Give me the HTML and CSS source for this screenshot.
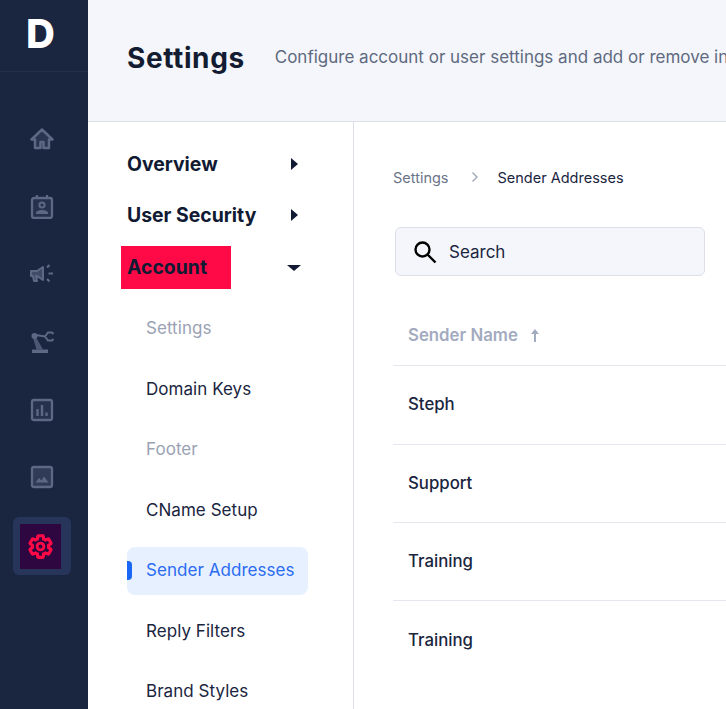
FILE: index.html
```html
<!DOCTYPE html>
<html lang="en">
<head>
<meta charset="utf-8">
<title>Settings</title>
<link rel="stylesheet" href="styles.css">
</head>
<body>
<div class="app">
  <aside class="rail">
    <div class="logo-row"><span class="logo">D</span></div>
    <nav class="rail-nav">
      <a class="rail-item"><svg viewBox="0 0 24 24" class="rail-icon"><path d="M12 2.500 1.500 12.500H5V21h5.500v-6h3v6H19v-8.500h3.500z" fill="currentColor" fill-opacity=".25" stroke="currentColor" stroke-width="2.500" stroke-linejoin="round"/></svg></a>
      <a class="rail-item"><svg viewBox="0 0 24 24" class="rail-icon"><rect x="2" y="3" width="20" height="20" rx="2" fill="currentColor" fill-opacity=".2" stroke="currentColor" stroke-width="2.300"/><path d="M7 0v4M17 0v4" stroke="currentColor" stroke-width="2.200"/><circle cx="12" cy="10" r="2.600" fill="none" stroke="currentColor" stroke-width="2"/><path d="M6 19v-1c0-2 3-3 6-3s6 1 6 3v1z" fill="currentColor"/></svg></a>
      <a class="rail-item"><svg viewBox="0 0 24 24" class="rail-icon"><path d="M1 9h6l6-4v13l-6-4H6l1 5H4l-1-5H1z" fill="currentColor" fill-opacity=".6" stroke="currentColor" stroke-width="2" stroke-linejoin="round"/><path d="M17 5.500 19.500 3M18.500 11.500H23M17 17l2.500 2.500" stroke="currentColor" stroke-width="2.200"/></svg></a>
      <a class="rail-item"><svg viewBox="0 0 24 24" class="rail-icon"><path d="M2 23h16v-3.500H2z" fill="currentColor"/><path d="M3 8h3.500L13 19.500H6.500z" fill="currentColor" fill-opacity=".75"/><circle cx="4.500" cy="6" r="3" fill="currentColor"/><path d="m6 5 9 1.500M15 6.500l3-4h4l1.500 1.500M15 6.500l3 4h4l1.500-1.500" fill="none" stroke="currentColor" stroke-width="2"/></svg></a>
      <a class="rail-item"><svg viewBox="0 0 24 24" class="rail-icon"><rect x="2" y="2" width="20" height="20" rx="2" fill="currentColor" fill-opacity=".2" stroke="currentColor" stroke-width="2.300"/><path d="M7.500 18v-7M12 18V7M16.500 18v-3.500" stroke="currentColor" stroke-width="2.400"/></svg></a>
      <a class="rail-item"><svg viewBox="0 0 24 24" class="rail-icon"><rect x="2" y="2" width="20" height="20" rx="2" fill="currentColor" fill-opacity=".35" stroke="currentColor" stroke-width="2.300"/><path d="m5.500 17.500 3.500-4.500 2.500 2.500 2.500-4 4.500 6z" fill="currentColor"/></svg></a>
      <a class="rail-item rail-item-active"><span class="gear-box"><svg viewBox="0 0 24 24" class="gear"><path d="M19.140 12.940c.04-.3.060-.61.060-.94 0-.32-.02-.64-.07-.94l2.030-1.580a.49.490 0 0 0 .12-.61l-1.920-3.320a.49.490 0 0 0-.59-.22l-2.390.96c-.5-.38-1.030-.7-1.620-.94l-.36-2.540a.48.480 0 0 0-.48-.41h-3.840a.48.480 0 0 0-.47.41l-.36 2.540c-.59.240-1.130.57-1.620.94l-2.390-.96a.48.480 0 0 0-.59.220L2.740 8.870a.48.480 0 0 0 .12.61l2.030 1.580c-.05.3-.09.63-.09.94s.02.640.07.94l-2.030 1.580a.49.490 0 0 0-.12.61l1.920 3.320c.12.220.37.290.59.220l2.390-.96c.5.380 1.030.7 1.620.94l.36 2.540c.05.240.24.410.48.410h3.840c.24 0 .44-.17.47-.41l.36-2.540c.59-.24 1.130-.56 1.620-.94l2.390.96c.22.080.47 0 .59-.22l1.920-3.320a.48.480 0 0 0-.12-.61z" fill="none" stroke="currentColor" stroke-width="2.800"/><circle cx="12" cy="12" r="3" fill="none" stroke="currentColor" stroke-width="2.600"/></svg></span></a>
    </nav>
  </aside>
  <div class="main">
    <header class="topbar">
      <h1 class="title">Settings</h1>
      <p class="subtitle">Configure account or user settings and add or remove integrations</p>
    </header>
    <div class="body">
      <nav class="side">
        <div class="group"><span>Overview</span><i class="caret-right"></i></div>
        <div class="group"><span>User Security</span><i class="caret-right"></i></div>
        <div class="group group-open"><span class="flagged">Account</span><i class="caret-down"></i></div>
        <a class="sub sub-muted">Settings</a>
        <a class="sub">Domain Keys</a>
        <a class="sub sub-muted">Footer</a>
        <a class="sub">CName Setup</a>
        <a class="sub sub-active">Sender Addresses</a>
        <a class="sub">Reply Filters</a>
        <a class="sub">Brand Styles</a>
      </nav>
      <section class="content">
        <div class="crumbs"><span class="crumb-link">Settings</span><svg viewBox="0 0 8 12" class="crumb-sep"><path d="m1.500 1.500 4.500 4.500-4.500 4.500" fill="none" stroke="currentColor" stroke-width="1.300"/></svg><span class="crumb-now">Sender Addresses</span></div>
        <div class="search"><svg viewBox="0 0 24 24" class="search-icon"><circle cx="9.500" cy="9.500" r="7" fill="none" stroke="currentColor" stroke-width="2.400"/><path d="m14.500 14.500 8 8" stroke="currentColor" stroke-width="2.400"/></svg><span>Search</span></div>
        <div class="thead"><span>Sender Name</span><svg viewBox="0 0 10 14" class="sort"><path d="M5 14V4" stroke="currentColor" stroke-width="2"/><path d="M1 6l4-5 4 5z" fill="currentColor"/></svg></div>
        <div class="row row-tall">Steph</div>
        <div class="row">Support</div>
        <div class="row">Training</div>
        <div class="row row-last">Training</div>
      </section>
    </div>
  </div>
</div>
</body>
</html>
```
FILE: styles.css
```css
html, body { margin: 0; padding: 0; height: 100%; overflow: hidden; background: #fff; }
body { font-family: Inter, "Liberation Sans", sans-serif; color: #1a2540; }
a { display: block; }
.app { display: flex; height: 709px; width: 726px; overflow: hidden; }
.rail { flex: 0 0 88px; background: #1a2540; display: flex; flex-direction: column; }
.logo-row { height: 71px; border-bottom: 1px solid #232f4d; display: flex; justify-content: center; }
.logo { font: 800 40px/67px Inter, sans-serif; color: #fff; margin-left: -7px; }
.rail-nav { display: flex; flex-direction: column; padding-top: 33px; align-items: center; }
.rail-item { width: 58px; height: 67.700px; display: flex; align-items: center; justify-content: center; color: #5c6884; margin-left: -5px; }
.rail-icon { width: 24px; height: 24px; }
.rail-item-active { height: 58px; margin-top: 6px; background: #27355a; border-radius: 6px; }
.gear-box { width: 41px; height: 45px; margin: 1px 3px 0 0; background: #2e0640; display: flex; align-items: center; justify-content: center; color: #ff0a47; }
.gear { width: 27px; height: 27px; }
.main { flex: 1; min-width: 0; display: flex; flex-direction: column; }
.topbar { height: 121px; flex: none; background: #f5f6fb; border-bottom: 1px solid #dcdfe8; display: flex; align-items: center; padding-left: 39px; white-space: nowrap; overflow: hidden; }
.title { margin: -6px 30px 0 0; font: 700 28px/1 Inter, sans-serif; letter-spacing: .6px; color: #131c30; }
.subtitle { margin: -8px 0 0; font-size: 17px; color: #5e6a80; }
.body { flex: 1; display: flex; min-height: 0; }
.side { width: 266px; flex: none; border-right: 1px solid #dcdfe8; box-sizing: border-box; padding: 16px 0 0 39px; }
.group { width: 181px; height: 51px; display: flex; align-items: center; justify-content: space-between; font-size: 19.400px; font-weight: 700; color: #111a33; padding-right: 5px; box-sizing: border-box; }
.flagged { background: #ff0a47; margin-left: -6px; padding-left: 6px; width: 104px; height: 43px; line-height: 43px; }
.caret-right { width: 0; height: 0; border-left: 7px solid #111a33; border-top: 6px solid transparent; border-bottom: 6px solid transparent; margin-right: 5px; }
.caret-down { width: 0; height: 0; border-top: 6px solid #111a33; border-left: 7px solid transparent; border-right: 7px solid transparent; margin-right: 2px; }
.group-open { margin-top: 2px; margin-bottom: 11px; }
.sub { width: 181px; height: 48px; margin-bottom: 12.500px; padding-left: 19px; box-sizing: border-box; font-size: 17px; letter-spacing: .05px; line-height: 48px; color: #1a2540; border-radius: 8px; position: relative; }
.sub-muted { color: #9aa2b4; }
.sub-active { background: #e6f0ff; color: #2b6cf0; margin-top: 13.500px; margin-bottom: 11.500px; line-height: 46px; }
.sub-active::before { content: ""; position: absolute; left: 0; top: 14px; width: 5px; height: 19px; background: #1a66f5; border-radius: 0 4px 4px 0; }
.content { flex: 1; min-width: 0; padding: 46px 0 0 39px; overflow: hidden; }
.crumbs { display: flex; align-items: center; font-size: 14.500px; height: 18px; white-space: nowrap; }
.crumb-link { color: #6a7488; }
.crumb-sep { width: 8px; height: 12px; color: #9aa2b4; margin: 0 19px 0 22px; }
.crumb-now { color: #1a2540; }
.search { margin: 41px 0 0 2px; width: 310px; height: 49px; box-sizing: border-box; background: #f5f6fb; border: 1px solid #dcdfe8; border-radius: 6px; display: flex; align-items: center; padding-left: 17px; font-size: 17px; color: #1a2540; }
.search-icon { width: 24px; height: 24px; color: #000; margin-right: 12px; flex: none; }
.thead { margin-top: 29px; height: 61px; box-sizing: border-box; padding-left: 15px; display: flex; align-items: center; gap: 12px; font-size: 16.800px; font-weight: 600; color: #a3abc0; border-bottom: 1px solid #e5e7ee; }
.sort { width: 10px; height: 14px; }
.row { height: 78px; box-sizing: border-box; padding: 0 0 2px 15px; display: flex; align-items: center; font-size: 16.800px; font-weight: 500; color: #1a2540; border-bottom: 1px solid #e5e7ee; }
.row-tall { height: 79px; padding-bottom: 3px; }
.row-last { height: 80px; border-bottom: none; }
```
